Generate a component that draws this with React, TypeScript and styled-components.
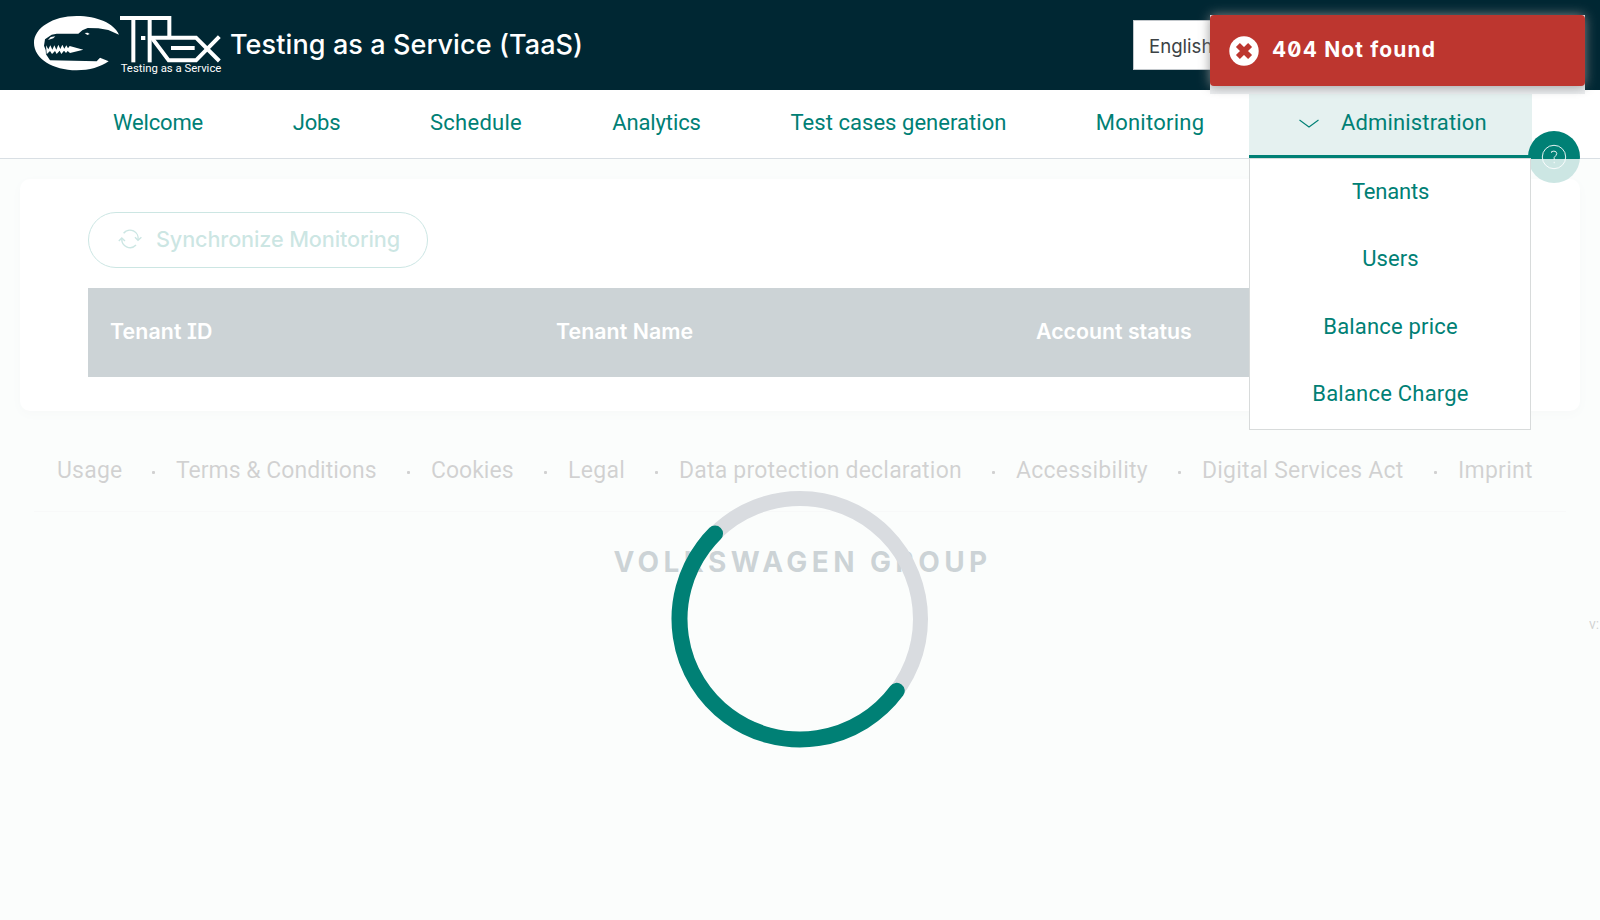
import React from "react";
import styled, { createGlobalStyle } from "styled-components";

const GlobalStyle = createGlobalStyle`
  *, *::before, *::after { box-sizing: border-box; }
  body { margin: 0; overflow: hidden; background: #fbfdfc; }
  ul { list-style: none; margin: 0; padding: 0; }
`;

const green = "#008075";
const navy = "#002733";
const roboto = `Roboto, "Liberation Sans", sans-serif`;
const inter = `Inter, "Liberation Sans", sans-serif`;

const Page = styled.div`
  position: relative;
  height: 920px;
  overflow: hidden;
  background: #ebf5f1;
  font-family: ${roboto};
`;

const Header = styled.header`
  display: flex;
  align-items: center;
  height: 90px;
  padding: 0 36px 0 32px;
  background: ${navy};
`;

const Title = styled.h1`
  flex: 1;
  margin: 0 0 0 7px;
  font: 500 27px/40px ${inter};
  letter-spacing: 0.1px;
  color: #fff;
`;

const LanguageSelect = styled.div`
  width: 431px;
  height: 50px;
  padding: 0 15px;
  border: 1px solid #c3c8cc;
  background: #fff;
  color: #3c4245;
  font: 400 18.6px/51px ${inter};
`;

const Nav = styled.nav`
  display: flex;
  height: 69px;
  padding-left: 68px;
  border-bottom: 1px solid #d9dfe4;
  background: #fff;
`;

const NavItem = styled.a<{ $width: number; $track?: number }>`
  width: ${(p) => p.$width}px;
  text-align: center;
  white-space: nowrap;
  font-size: 22px;
  line-height: 66px;
  letter-spacing: ${(p) => p.$track ?? 0}px;
  color: ${green};
`;

const ActiveTab = styled.div`
  position: relative;
  display: flex;
  align-items: center;
  gap: 21px;
  width: 283px;
  height: 68px;
  padding-left: 49px;
  border-bottom: 3px solid ${green};
  background: #e5f1f0;
  color: ${green};
  font-size: 22px;
  line-height: 67px;
  letter-spacing: 0.15px;
`;

const Dropdown = styled.ul`
  position: absolute;
  z-index: 4;
  top: 68px;
  left: 0;
  width: 282px;
  height: 272px;
  padding-left: 1px;
  border: 1px solid #d8dbdb;
  background: #fff;
`;

const DropdownItem = styled.li<{ $track?: number }>`
  height: 67.4px;
  text-align: center;
  line-height: 65px;
  letter-spacing: ${(p) => p.$track ?? 0}px;
`;

const HelpButton = styled.div`
  position: absolute;
  z-index: 1;
  top: 131px;
  left: 1528px;
  display: flex;
  align-items: center;
  justify-content: center;
  width: 52px;
  height: 52px;
  border-radius: 50%;
  background: ${green};
`;

const Card = styled.main`
  height: 232px;
  margin: 20px 20px 0;
  padding: 33px 68px 0;
  border-radius: 10px;
  background: #fff;
  box-shadow: 0 3px 12px rgba(0, 0, 40, 0.1);
`;

const SyncButton = styled.button`
  display: flex;
  align-items: center;
  gap: 14px;
  width: 340px;
  height: 56px;
  padding: 0 0 2px 29px;
  border: 1px solid ${green};
  border-radius: 28px;
  background: transparent;
  color: ${green};
  font: 500 21.7px/30px ${inter};
  letter-spacing: -0.15px;
  white-space: nowrap;
`;

const TableHead = styled.div`
  display: flex;
  height: 89px;
  margin-top: 20px;
  padding-left: 22px;
  background: ${navy};
  color: #fff;
  font: 600 21.3px/87px ${inter};
  font-feature-settings: "cv08";
`;

const HeadCell = styled.div<{ $width: number; $track?: number }>`
  width: ${(p) => p.$width}px;
  letter-spacing: ${(p) => p.$track ?? 0}px;
`;

const Footer = styled.footer`
  margin: 40px 34px 0;
`;

const FooterLinks = styled.ul`
  display: flex;
  height: 61px;
  padding-left: 23px;
  border-bottom: 1px solid #dde2e2;
  color: #1a1c1c;
  font-size: 23px;
  line-height: 40px;
  white-space: nowrap;
`;

const FooterLink = styled.li<{ $width: number; $track?: number }>`
  display: flex;
  justify-content: space-between;
  width: ${(p) => p.$width}px;
  letter-spacing: ${(p) => p.$track ?? 0}px;
`;

const Dot = styled.span`
  width: 3px;
  height: 3px;
  margin: 20px 21px 0 0;
  border-radius: 1px;
  background: currentColor;
`;

const Brand = styled.div`
  margin-top: 30px;
  padding-left: 5px;
  text-align: center;
  font: 700 28px/40px ${inter};
  letter-spacing: 4.4px;
  color: ${navy};
`;

const Version = styled.div`
  width: 12px;
  margin: 32px 0 0 1589px;
  overflow: hidden;
  font-size: 14px;
  line-height: 20px;
  color: #1a1c1c;
`;

const Overlay = styled.div`
  position: absolute;
  z-index: 2;
  top: 159px;
  left: 0;
  display: flex;
  align-items: center;
  justify-content: center;
  width: 100%;
  height: 921px;
  background: rgba(255, 255, 255, 0.8);
`;

const Toast = styled.div`
  position: absolute;
  z-index: 5;
  top: 15px;
  left: 1210px;
  width: 375px;
  height: 79px;
  background: #eceef0;
`;

const ToastBody = styled.div`
  display: flex;
  align-items: center;
  gap: 14px;
  height: 71px;
  padding-left: 19px;
  border-radius: 4px;
  background: #bd362f;
  box-shadow: 0 0 12px rgba(153, 153, 153, 0.85), 0 3px 8px rgba(0, 0, 0, 0.1);
  color: #fff;
  font: 700 21px/30px ${inter};
  font-feature-settings: "zero";
  letter-spacing: 1.15px;
`;

const ToastText = styled.span`
  margin-left: -1px;
  padding-bottom: 1px;
`;

function Logo() {
  return (
    <svg width="191" height="62" viewBox="36 42 573 186">
      <path
        fill="#fff"
        d="M297 104C282 70 232 48 170 48C98 48 42 84 42 129C42 175 98 211 170 211C208 211 242 201 266 184L240 173L230 184L90 181L78 163L77 150L72 137L75 118L95 104L110 101L175 101L187 91L203 84L235 85L265 90Z"
      />
      <path
        fill="#fff"
        d="M78 136L85 148L91 136L97 149L103 136L109 149L115 134L121 147L127 134L133 146L139 136L144 145L149 138L190 149L150 159L143 153L138 159L132 152L124 162L119 152L110 162L105 153L96 162L90 153L80 163Z"
      />
      <path fill="#fff" d="M84 120L92 111L106 109L100 115Z" />
      <path fill="#fff" d="M194 99L203 98L209 102L202 105Z" />
      <g fill="none" stroke="#fff" strokeWidth="12">
        <path d="M300 54H448V113" />
        <path d="M340 54V187" />
        <path d="M389 54V187" />
        <path d="M389 113H528L598 183" />
        <path d="M395 113L446 181H528L598 110" />
        <path d="M453 144H524" />
      </g>
      <rect x="363" y="108" width="13" height="12" fill="#fff" />
      <text x="302" y="215" fill="#fff" fontFamily="Roboto, sans-serif" fontSize="34" textLength="302" lengthAdjust="spacingAndGlyphs">
        Testing as a Service
      </text>
    </svg>
  );
}

function Chevron() {
  return (
    <svg width="22" height="12" viewBox="0 0 22 12" fill="none" stroke={green} strokeWidth="1.1">
      <path d="M1.5 3L11 10L20.5 3" />
    </svg>
  );
}

function HelpIcon() {
  return (
    <svg width="26" height="26" viewBox="0 0 26 26" fill="none" stroke="#fff" strokeWidth="0.9">
      <circle cx="13" cy="13" r="11.7" />
      <path d="M10.6 8.8V7.6Q13 6.7 14.8 7.6Q16.6 9.4 15 11.4L13.2 13.4V15.8" />
      <path d="M13.2 17.8V19.2" />
    </svg>
  );
}

function SyncIcon() {
  return (
    <svg width="24" height="20" viewBox="0 0 24 20" fill="none" stroke={green} strokeWidth="1.4">
      <path d="M5.6 4.2A8.2 8.2 0 0 1 20 11" />
      <path d="M17 8.2L20 11.2L23.4 8.2" />
      <path d="M18 16A8.2 8.2 0 0 1 3.9 9.4" />
      <path d="M0.8 12L3.8 9L7 12" />
    </svg>
  );
}

function ErrorIcon() {
  return (
    <svg width="30" height="30" viewBox="0 0 30 30">
      <circle cx="15" cy="15" r="14.7" fill="#fff" />
      <path d="M8.9 8.9L21.1 21.1M21.1 8.9L8.9 21.1" stroke="#bd362f" strokeWidth="5.6" />
    </svg>
  );
}

function Spinner() {
  return (
    <svg width="260" height="260" viewBox="-130 -129 260 260" fill="none">
      <circle r="120.5" stroke="#d9dce0" strokeWidth="15" />
      <circle
        r="120.5"
        stroke={green}
        strokeWidth="16"
        strokeLinecap="round"
        pathLength={360}
        strokeDasharray="188.6 171.4"
        transform="rotate(36.6)"
      />
    </svg>
  );
}

const navItems = [
  { label: "Welcome", width: 180, track: -0.15 },
  { label: "Jobs", width: 137, track: -0.2 },
  { label: "Schedule", width: 182, track: 0.25 },
  { label: "Analytics", width: 179, track: -0.1 },
  { label: "Test cases generation", width: 305, track: 0.04 },
  { label: "Monitoring", width: 198, track: 0.25 },
];

const adminItems = [
  { label: "Tenants", track: -0.2 },
  { label: "Users", track: 0.1 },
  { label: "Balance price", track: 0.18 },
  { label: "Balance Charge", track: 0.22 },
];

const footerItems = [
  { label: "Usage", width: 119, track: 0.2 },
  { label: "Terms & Conditions", width: 255, track: 0 },
  { label: "Cookies", width: 137, track: 0 },
  { label: "Legal", width: 111, track: 0.3 },
  { label: "Data protection declaration", width: 337, track: 0.2 },
  { label: "Accessibility", width: 186, track: 0.25 },
  { label: "Digital Services Act", width: 256, track: 0.2 },
  { label: "Imprint", width: 76, track: 0.25 },
];

export default function App() {
  return (
    <Page>
      <GlobalStyle />
      <Header>
        <Logo />
        <Title>Testing as a Service (TaaS)</Title>
        <LanguageSelect>English</LanguageSelect>
      </Header>
      <Nav>
        {navItems.map((item) => (
          <NavItem key={item.label} $width={item.width} $track={item.track}>
            {item.label}
          </NavItem>
        ))}
        <ActiveTab>
          <Chevron />
          Administration
          <Dropdown>
            {adminItems.map((item) => (
              <DropdownItem key={item.label} $track={item.track}>
                {item.label}
              </DropdownItem>
            ))}
          </Dropdown>
        </ActiveTab>
      </Nav>
      <HelpButton>
        <HelpIcon />
      </HelpButton>
      <Card>
        <SyncButton>
          <SyncIcon />
          Synchronize Monitoring
        </SyncButton>
        <TableHead>
          <HeadCell $width={446} $track={0.12}>Tenant ID</HeadCell>
          <HeadCell $width={480} $track={0.08}>Tenant Name</HeadCell>
          <HeadCell $width={300}>Account status</HeadCell>
        </TableHead>
      </Card>
      <Footer>
        <FooterLinks>
          {footerItems.map((item, i) => (
            <FooterLink key={item.label} $width={item.width} $track={item.track}>
              {item.label}
              {i < footerItems.length - 1 && <Dot />}
            </FooterLink>
          ))}
        </FooterLinks>
        <Brand>VOLKSWAGEN GROUP</Brand>
      </Footer>
      <Version>v:</Version>
      <Overlay>
        <Spinner />
      </Overlay>
      <Toast>
        <ToastBody>
          <ErrorIcon />
          <ToastText>404 Not found</ToastText>
        </ToastBody>
      </Toast>
    </Page>
  );
}
